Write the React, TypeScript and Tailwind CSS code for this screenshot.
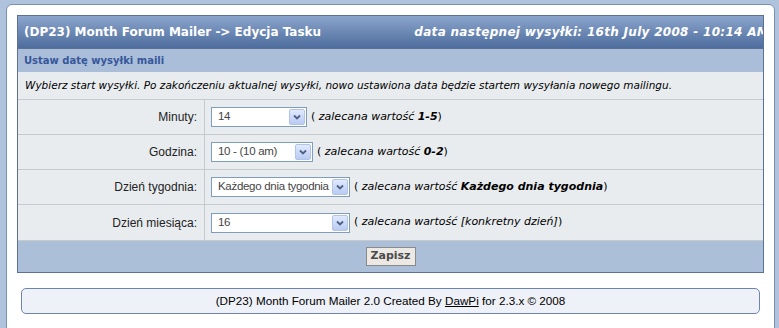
import React from "react";

const verdana = { fontFamily: '"DejaVu Sans", Verdana, sans-serif' };
const tahoma = { fontFamily: '"Liberation Sans", Tahoma, Arial, sans-serif' };

function FakeSelect({ value, width }: { value: string; width: string }) {
  return (
    <div
      className={`flex h-[20px] shrink-0 items-center justify-between border border-[#7f9db9] bg-white pl-[6px] pr-[1px] text-[11.5px] tracking-[-0.3px] text-[#444] ${width}`}
      style={tahoma}
    >
      <span className="whitespace-nowrap">{value}</span>
      <span className="flex h-[16px] w-[16px] items-center justify-center rounded-[2px] border border-[#b2c4e6] bg-gradient-to-b from-[#e1eafe] to-[#b9cbf3]">
        <svg width="8" height="6" viewBox="0 0 8 6">
          <path d="M1 1.5 L4 4.5 L7 1.5" stroke="#4d6185" strokeWidth="1.8" fill="none" />
        </svg>
      </span>
    </div>
  );
}

const rows = [
  { label: "Minuty:", value: "14", width: "w-[96px]", hint: "1-5" },
  { label: "Godzina:", value: "10 - (10 am)", width: "w-[102px]", hint: "0-2" },
  { label: "Dzień tygodnia:", value: "Każdego dnia tygodnia", width: "w-[139px]", hint: "Każdego dnia tygodnia" },
  { label: "Dzień miesiąca:", value: "16", width: "w-[139px]", hint: null },
];

export default function App() {
  return (
    <div className="min-h-screen bg-[#b0c3dd] pl-[6px] pr-[4px] pt-[4px]">
      <div className="min-h-[330px] rounded-t-[6px] border border-[#7990b5] bg-white px-[10px] pt-[10px]">
        {/* Main table */}
        <div className="border border-[#5b7198]">
          <div
            className="flex h-[32px] items-center justify-between overflow-hidden bg-gradient-to-b from-[#8ba5cc] to-[#4e6d9d] pl-[6px] text-white"
            style={verdana}
          >
            <span className="whitespace-nowrap text-[12px] font-bold">(DP23) Month Forum Mailer -&gt; Edycja Tasku</span>
            <span className="-mr-[6px] shrink-0 whitespace-nowrap text-[12px] font-bold italic tracking-[0.3px]">
              data następnej wysyłki: 16th July 2008 - 10:14 AM
            </span>
          </div>
          <div
            className="flex h-[24px] items-center border-t border-[#5b7198] bg-[#abbed9] pl-[6px] text-[10px] font-bold text-[#36579a]"
            style={verdana}
          >
            Ustaw datę wysyłki maili
          </div>
          <div
            className="flex h-[28px] items-center border-b border-[#c6cacf] bg-[#e9ecef] pl-[7px] text-[10.5px] italic text-black"
            style={verdana}
          >
            Wybierz start wysyłki. Po zakończeniu aktualnej wysyłki, nowo ustawiona data będzie startem wysyłania nowego mailingu.
          </div>
          {rows.map((r, i) => (
            <div
              key={r.label}
              className={`grid h-[35px] grid-cols-[187px_1fr] bg-[#e9ecef] ${i < rows.length - 1 ? "border-b border-[#c6cacf]" : ""}`}
            >
              <div className="flex items-center justify-end border-r border-[#c6cacf] pr-[7px] text-[12px] text-[#222]" style={tahoma}>
                {r.label}
              </div>
              <div className="flex items-center pl-[6px]">
                <FakeSelect value={r.value} width={r.width} />
                <span className="ml-[4px] whitespace-nowrap text-[11px] text-black" style={verdana}>
                  ( <i>zalecana wartość</i>{" "}
                  {r.hint ? <b className="italic">{r.hint}</b> : <i>[konkretny dzień]</i>})
                </span>
              </div>
            </div>
          ))}
          <div className="flex h-[32px] items-center justify-center border-t border-[#c6cacf] bg-[#abbfd9]">
            <button
              className="h-[19px] border border-[#8a8a8a] bg-[#ece9e4] px-[4px] text-[11px] font-bold text-[#4a4a4a]"
              style={verdana}
            >
              Zapisz
            </button>
          </div>
        </div>

        {/* Footer */}
        <div
          className="mx-[4px] mt-[15px] flex h-[26px] items-center justify-center rounded-[5px] border border-[#6e86ad] bg-[#eef1f7] text-[11.7px] text-black"
          style={tahoma}
        >
          <span>
            (DP23) Month Forum Mailer 2.0 Created By <span className="underline">DawPi</span> for 2.3.x © 2008
          </span>
        </div>
      </div>
    </div>
  );
}
